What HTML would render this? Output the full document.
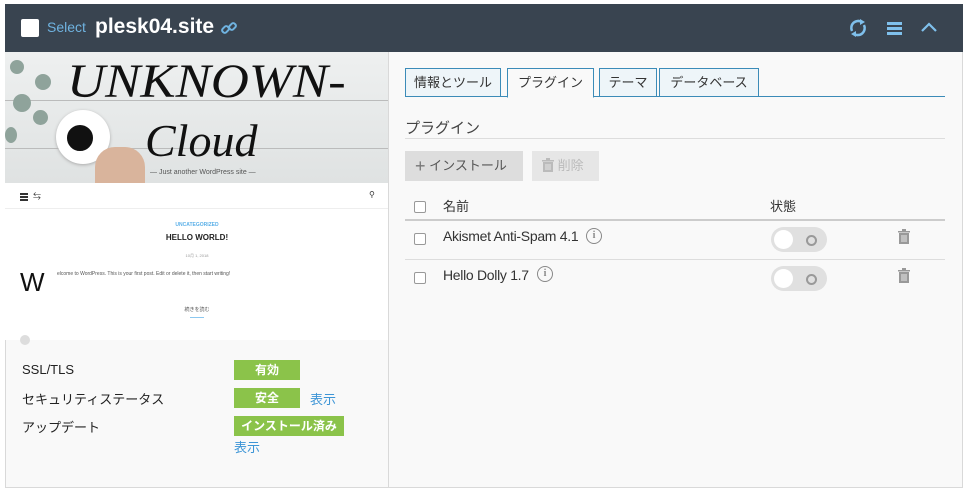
<!DOCTYPE html>
<html><head><meta charset="utf-8"><style>
*{box-sizing:border-box;margin:0;padding:0}
body{width:970px;height:504px;background:#fff;font-family:"Liberation Sans","Noto Sans CJK JP",sans-serif;position:relative;overflow:hidden}
.hdr{position:absolute;left:5px;top:4px;width:958px;height:48px;background:#394450}
.main{position:absolute;left:5px;top:52px;width:958px;height:436px;background:#f9f9f9;border:1px solid #d9d9d9;border-top:none}
.abs{position:absolute}
.tab{position:absolute;top:68px;height:29px;border:1px solid #3b8bb8;background:#eef5f9;font-size:13px;color:#333;line-height:27px;text-align:center}
.badge{position:absolute;left:234px;height:20px;background:#8bc34a;color:#fff;font-size:12px;font-weight:bold;line-height:20px;text-align:center}
.cb{position:absolute;left:414px;width:12px;height:12px;border:1px solid #999;border-radius:2px;background:#fff}
.tog{position:absolute;left:771px;width:56px;height:25px;border-radius:13px;background:#e0e0e0}
.tog:before{content:"";position:absolute;left:3px;top:3px;width:19px;height:19px;border-radius:50%;background:#fff}
.tog:after{content:"";position:absolute;left:35px;top:8px;width:7px;height:7px;border-radius:50%;border:2px solid #999}
.lbl{position:absolute;left:22px;font-size:13px;color:#222}
.info{position:absolute;width:16px;height:16px;border:1.5px solid #888;border-radius:50%;font-size:10px;color:#888;text-align:center;line-height:13px;font-weight:bold;font-family:"Liberation Serif",serif}
.trash{position:absolute;left:898px;width:12px;height:15px}
</style></head><body>
<div class="hdr">
 <div class="abs" style="left:16px;top:15px;width:18px;height:18px;background:#fff;border-radius:2px"></div>
 <div class="abs" style="left:42px;top:15px;color:#6fb3e0;font-size:14px">Select</div>
 <div class="abs" style="left:90px;top:11px;color:#fff;font-size:21px;font-weight:bold">plesk04.site</div>
 <svg class="abs" style="left:216px;top:16px" width="16" height="16" viewBox="0 0 16 16"><g fill="none" stroke="#6fb3e0" stroke-width="2"><rect x="1" y="7" width="7" height="5" rx="2" transform="rotate(-45 4.5 9.5)"/><rect x="8" y="4" width="7" height="5" rx="2" transform="rotate(-45 11.5 6.5)"/></g></svg>
 <svg class="abs" style="left:843px;top:14px" width="20" height="20" viewBox="0 0 20 20"><g fill="none" stroke="#7fc0ec" stroke-width="2.5"><path d="M4 13A7 7 0 0 1 14 4"/><path d="M16 7A7 7 0 0 1 6 16"/></g><path d="M12 1l5 3-5 3z M8 19l-5-3 5-3z" fill="#7fc0ec"/></svg>
 <div class="abs" style="left:882px;top:18px;width:15px;height:2.5px;background:#7fc0ec;box-shadow:0 5px 0 #7fc0ec,0 10px 0 #7fc0ec"></div>
 <svg class="abs" style="left:915px;top:17px" width="18" height="12" viewBox="0 0 18 12"><path d="M2 10L9 3l7 7" fill="none" stroke="#7fc0ec" stroke-width="2.2"/></svg>
</div>
<div class="main"></div>
<!-- hero -->
<div class="abs" style="left:5px;top:52px;width:384px;height:131px;background:linear-gradient(#eef0f0,#dfe2e2);overflow:hidden">
 <div class="abs" style="left:0;top:48px;width:384px;height:1px;background:#bbb"></div>
 <div class="abs" style="left:0;top:96px;width:384px;height:1px;background:#bbb"></div>
 <div class="abs" style="left:5px;top:8px;width:14px;height:14px;border-radius:50%;background:#8fa39b"></div>
 <div class="abs" style="left:30px;top:22px;width:16px;height:16px;border-radius:50%;background:#8fa39b"></div>
 <div class="abs" style="left:8px;top:42px;width:18px;height:18px;border-radius:50%;background:#8fa39b"></div>
 <div class="abs" style="left:28px;top:58px;width:15px;height:15px;border-radius:50%;background:#8fa39b"></div>
 <div class="abs" style="left:0;top:75px;width:12px;height:16px;border-radius:50%;background:#8fa39b"></div>
 <div class="abs" style="left:51px;top:58px;width:54px;height:54px;border-radius:50%;background:#fff;box-shadow:0 1px 3px #aaa"></div>
 <div class="abs" style="left:58px;top:69px;width:34px;height:34px;border-radius:50%;background:#111;border:4px solid #fff"></div>
 <div class="abs" style="left:90px;top:95px;width:50px;height:40px;background:#d9b49c;border-radius:20px 20px 0 0"></div>
 <div class="abs" style="left:62px;top:2px;font-family:'Liberation Serif',serif;font-style:italic;font-size:48px;color:#111;transform:scaleX(1.1);transform-origin:left">UNKNOWN-</div>
 <div class="abs" style="left:140px;top:62px;font-family:'Liberation Serif',serif;font-style:italic;font-size:46px;color:#111">Cloud</div>
 <div class="abs" style="left:145px;top:117px;font-size:7px;color:#555">— Just another WordPress site —</div>
</div>
<div class="abs" style="left:5px;top:183px;width:384px;height:157px;background:#fff">
 <div class="abs" style="left:15px;top:10px;width:8px;height:1.5px;background:#333;box-shadow:0 3px 0 #333,0 6px 0 #333"></div>
 <div class="abs" style="left:28px;top:8px;font-size:8px;color:#333">⇆</div>
 <div class="abs" style="left:364px;top:7px;font-size:8px;color:#333">⚲</div>
 <div class="abs" style="left:0;top:25px;width:384px;height:1px;background:#eee"></div>
 <div class="abs" style="left:0;top:39px;width:384px;text-align:center;font-size:5px;color:#5bb0e8;font-weight:bold">UNCATEGORIZED</div>
 <div class="abs" style="left:0;top:50px;width:384px;text-align:center;font-size:8px;color:#222;font-weight:bold">HELLO WORLD!</div>
 <div class="abs" style="left:0;top:70px;width:384px;text-align:center;font-size:4px;color:#999">10月 1, 2018</div>
 <div class="abs" style="left:15px;top:84px;font-size:26px;color:#111">W</div>
 <div class="abs" style="left:52px;top:88px;font-size:5px;color:#555">elcome to WordPress. This is your first post. Edit or delete it, then start writing!</div>
 <div class="abs" style="left:0;top:123px;width:384px;text-align:center;font-size:5px;color:#555">続きを読む</div>
 <div class="abs" style="left:185px;top:134px;width:14px;height:1px;background:#8cc8f0"></div>
 <div class="abs" style="left:15px;top:152px;width:10px;height:10px;border-radius:50%;background:#ddd"></div>
</div>
<div class="lbl" style="top:362px">SSL/TLS</div>
<div class="lbl" style="top:389px">セキュリティステータス</div>
<div class="lbl" style="top:417px">アップデート</div>
<div class="badge" style="top:360px;width:66px">有効</div>
<div class="badge" style="top:388px;width:66px">安全</div>
<div class="abs" style="left:310px;top:389px;font-size:13px;color:#3d95d6">表示</div>
<div class="badge" style="top:416px;width:110px">インストール済み</div>
<div class="abs" style="left:234px;top:437px;font-size:13px;color:#3d95d6">表示</div>
<div class="abs" style="left:388px;top:52px;width:1px;height:436px;background:#d9d9d9"></div>
<!-- right -->
<div class="abs" style="left:405px;top:96px;width:540px;height:1px;background:#3b8bb8"></div>
<div class="tab" style="left:405px;width:96px">情報とツール</div>
<div class="tab" style="left:507px;width:87px;background:#f9f9f9;border-bottom-color:#f9f9f9;height:30px">プラグイン</div>
<div class="tab" style="left:599px;width:58px">テーマ</div>
<div class="tab" style="left:659px;width:100px">データベース</div>
<div class="abs" style="left:405px;top:117px;font-size:15px;color:#444">プラグイン</div>
<div class="abs" style="left:405px;top:138px;width:540px;height:1px;background:#ddd"></div>
<div class="abs" style="left:405px;top:151px;width:118px;height:30px;background:#ddd;color:#555;font-size:13px;line-height:30px;padding-left:10px"><span style="font-size:18px;color:#777;vertical-align:-2px">+</span> インストール</div>
<div class="abs" style="left:532px;top:151px;width:67px;height:30px;background:#e6e6e6;color:#bbb;font-size:13px;line-height:30px;padding-left:10px">
<svg style="vertical-align:-2px" width="12" height="14" viewBox="0 0 12 14"><path d="M0 2h12v1.5H0zM4 0h4v2H4zM1 4h10v10H1z" fill="#bbb"/><path d="M4 6v6M6 6v6M8 6v6" stroke="#e6e6e6" stroke-width="1"/></svg> 削除</div>
<div class="cb" style="top:201px"></div>
<div class="abs" style="left:443px;top:196px;font-size:13px;color:#333">名前</div>
<div class="abs" style="left:770px;top:196px;font-size:13px;color:#333">状態</div>
<div class="abs" style="left:405px;top:219px;width:540px;height:2px;background:#ccc"></div>
<div class="cb" style="top:233px"></div>
<div class="abs" style="left:443px;top:228px;font-size:14px;color:#333;letter-spacing:-0.3px">Akismet Anti-Spam 4.1</div>
<div class="info" style="left:586px;top:228px">i</div>
<div class="tog" style="top:227px"></div>
<svg class="trash" style="top:229px" viewBox="0 0 12 15"><path d="M0 2h12v1.5H0zM4 0h4v2H4zM1 4h10v11H1z" fill="#999"/><path d="M4 6v7M6 6v7M8 6v7" stroke="#f9f9f9" stroke-width="0.8"/></svg>
<div class="abs" style="left:405px;top:259px;width:540px;height:1px;background:#ddd"></div>
<div class="cb" style="top:272px"></div>
<div class="abs" style="left:443px;top:267px;font-size:14px;color:#333;letter-spacing:-0.3px">Hello Dolly 1.7</div>
<div class="info" style="left:537px;top:266px">i</div>
<div class="tog" style="top:266px"></div>
<svg class="trash" style="top:268px" viewBox="0 0 12 15"><path d="M0 2h12v1.5H0zM4 0h4v2H4zM1 4h10v11H1z" fill="#999"/><path d="M4 6v7M6 6v7M8 6v7" stroke="#f9f9f9" stroke-width="0.8"/></svg>
</body></html>
